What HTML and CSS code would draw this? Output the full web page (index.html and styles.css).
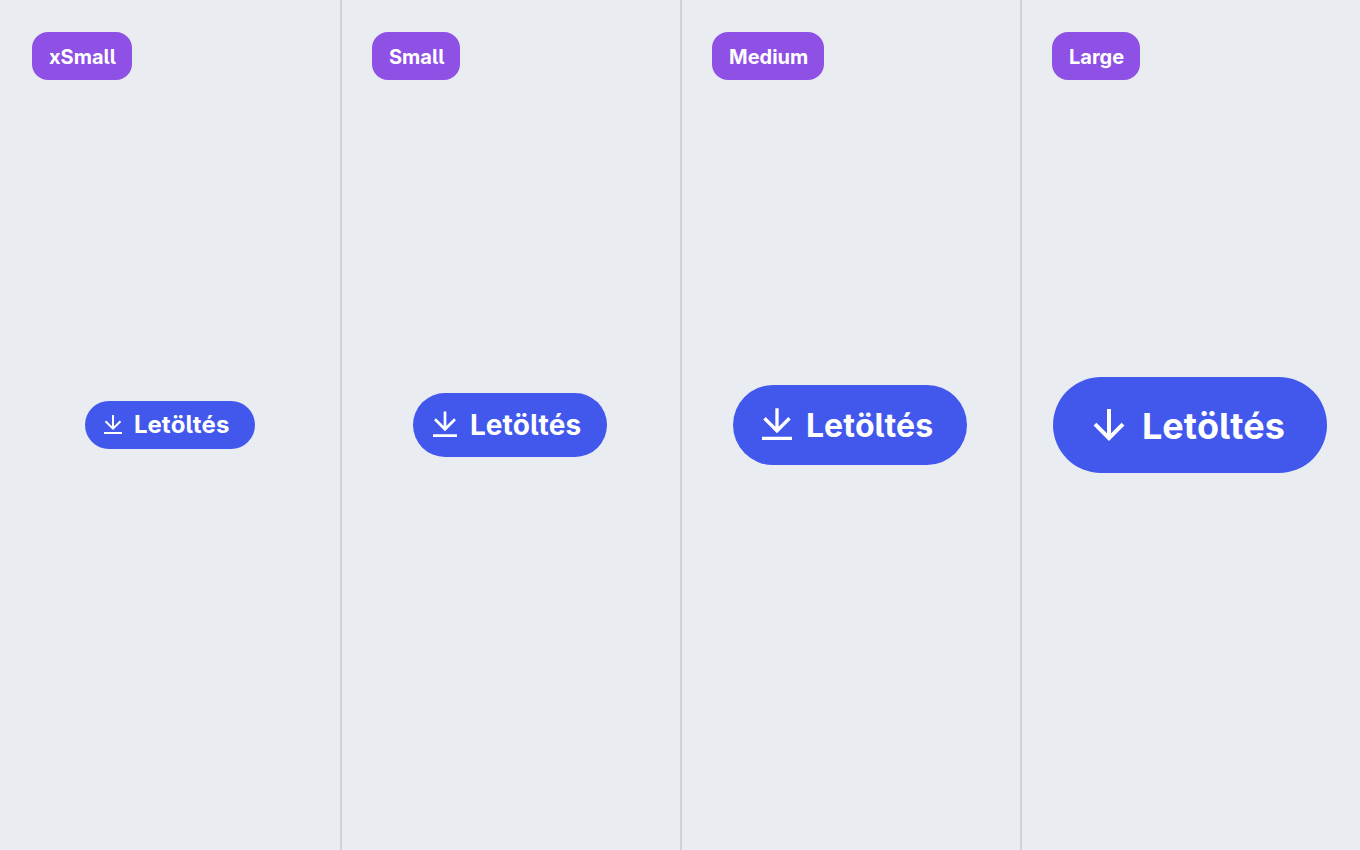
FILE: index.html
```html
<!DOCTYPE html>
<html lang="hu">
<head>
  <meta charset="UTF-8">
  <meta name="viewport" content="width=device-width, initial-scale=1">
  <title>Letöltés</title>
  <link rel="stylesheet" href="styles.css">
</head>
<body>
  <main class="sizes">
    <section class="size">
      <span class="badge">xSmall</span>
      <div class="stage">
        <button type="button" class="btn btn-xs">
          <svg viewBox="0 0 24 24" fill="none" stroke="currentColor" stroke-width="2" aria-hidden="true">
            <path d="M12 2v14M4.5 8.2l7.5 7.5 7.5-7.5M3 20h18"/>
          </svg>
          <span>Letöltés</span>
        </button>
      </div>
    </section>

    <section class="size">
      <span class="badge">Small</span>
      <div class="stage">
        <button type="button" class="btn btn-s">
          <svg viewBox="0 0 32 32" fill="none" stroke="currentColor" stroke-width="2.67" aria-hidden="true">
            <path d="M16 2.6v17.4M6 10.3l10 10 10-10M4 26.7h24"/>
          </svg>
          <span>Letöltés</span>
        </button>
      </div>
    </section>

    <section class="size">
      <span class="badge">Medium</span>
      <div class="stage">
        <button type="button" class="btn btn-m">
          <svg viewBox="0 0 40 40" fill="none" stroke="currentColor" stroke-width="3.33" aria-hidden="true">
            <path d="M20 3.3v22M7.5 13.3l12.5 12.5 12.5-12.5M5 33.3h30"/>
          </svg>
          <span>Letöltés</span>
        </button>
      </div>
    </section>

    <section class="size">
      <span class="badge">Large</span>
      <div class="stage">
        <button type="button" class="btn btn-l">
          <svg viewBox="0 0 48 48" fill="none" stroke="currentColor" stroke-width="4" aria-hidden="true">
            <path d="M24 8v29M10 23.2l14 14 14-14"/>
          </svg>
          <span>Letöltés</span>
        </button>
      </div>
    </section>
  </main>
</body>
</html>
```

FILE: styles.css
```css
:root {
  --background: #e9edf2;
  --divider: #cfd3d9;
  --badge: #8f50e6;
  --primary: #4258ed;
}

* {
  box-sizing: border-box;
}

body {
  margin: 0;
  background: var(--background);
  font-family: Inter, "Liberation Sans", sans-serif;
  font-feature-settings: "cv05";
  font-weight: 700;
  color: #fff;
}

.sizes {
  display: grid;
  grid-template-columns: repeat(4, 1fr);
  min-height: 100vh;
}

.size {
  display: grid;
  grid-template-rows: 48px 1fr 48px;
  justify-items: start;
  padding: 32px 0;
}

.size + .size {
  box-shadow: inset 2px 0 var(--divider);
}

.badge {
  margin-left: 32px;
  padding: 1px 16px 0 17px;
  border-radius: 16px;
  background: var(--badge);
  font-size: 20px;
  line-height: 48px;
}

.stage {
  display: flex;
  align-items: center;
  justify-self: center;
}

.btn {
  display: flex;
  align-items: center;
  gap: 9px;
  border: 0;
  border-radius: 48px;
  background: var(--primary);
  color: inherit;
  font-family: inherit;
  font-feature-settings: inherit;
  font-kerning: none;
  font-weight: inherit;
  white-space: nowrap;
  cursor: pointer;
}

.btn svg {
  flex: none;
}

.btn-xs {
  min-width: 170px;
  height: 48px;
  padding: 0 24px 0 16px;
  font-size: 24px;
  line-height: 28px;
}

.btn-xs svg {
  width: 24px;
}

.btn-s {
  min-width: 194px;
  height: 64px;
  padding: 0 24px 0 16px;
  font-size: 28px;
}

.btn-s svg {
  width: 32px;
}

.btn-m {
  min-width: 234px;
  height: 80px;
  padding: 0 32px 0 24px;
  font-size: 32px;
}

.btn-m svg {
  width: 40px;
}

.btn-l {
  min-width: 274px;
  height: 96px;
  padding: 0 40px 0 32px;
  font-size: 36px;
}

.btn-l svg {
  width: 48px;
}

.btn-l span {
  padding-top: 2px;
}
```
